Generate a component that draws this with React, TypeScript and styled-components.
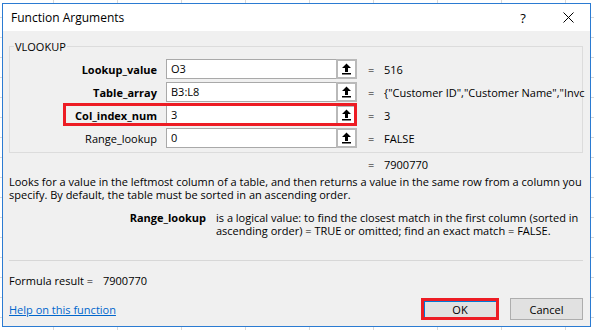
import styled, { createGlobalStyle } from "styled-components";

const GlobalStyle = createGlobalStyle`
  html, body {
    margin: 0;
    padding: 0;
  }
  body {
    width: 594px;
    height: 330px;
    overflow: hidden;
    background-color: #ffffff;
    background-image: linear-gradient(#d9d9d9 1px, transparent 1px),
      linear-gradient(90deg, #d9d9d9 1px, transparent 1px);
    background-size: 64px 20px;
    background-position: 53px 17px;
    font-family: "Segoe UI", "Open Sans", "Noto Sans", sans-serif;
    font-size: 11px;
    color: #000;
  }
`;

const Page = styled.div`
  padding: 3px 3px 3px 2px;
`;

const Dialog = styled.div`
  box-sizing: border-box;
  width: 589px;
  height: 324px;
  border: 1px solid #2b7bd2;
  background: #f0f0f0;
  display: flex;
  flex-direction: column;
`;

const TitleBar = styled.div`
  height: 27px;
  background: #ffffff;
  display: flex;
  align-items: center;
  padding-left: 8px;
`;

const Title = styled.div`
  font-size: 12px;
  flex: 1;
`;

const TitleButton = styled.div<{ $w: number }>`
  width: ${(p) => p.$w}px;
  height: 27px;
  display: flex;
  align-items: center;
  justify-content: center;
  font-size: 13px;
`;

const Content = styled.div`
  flex: 1;
  display: flex;
  flex-direction: column;
  padding: 0 7px 6px 6px;
`;

const Group = styled.fieldset`
  margin: 9px 0 0 0;
  padding: 6px 0 4px 0;
  border: 1px solid #dcdcdc;
  min-width: 0;
`;

const Legend = styled.legend`
  margin-left: 4px;
  padding: 0 1px;
  line-height: 13px;
`;

const Rows = styled.div`
  display: flex;
  flex-direction: column;
  gap: 3px;
`;

const Row = styled.div`
  position: relative;
  display: flex;
  align-items: center;
  height: 20px;
`;

const ArgLabel = styled.div<{ $required?: boolean }>`
  width: 147px;
  margin-right: 9px;
  text-align: right;
  font-weight: ${(p) => (p.$required ? 700 : 400)};
`;

const InputBox = styled.div`
  box-sizing: border-box;
  width: 170px;
  height: 20px;
  background: #ffffff;
  border: 1px solid #a9a9a9;
  border-right: none;
  padding-left: 4px;
  line-height: 18px;
`;

const RefButton = styled.div`
  box-sizing: border-box;
  width: 21px;
  height: 20px;
  background: #ffffff;
  border: 2px solid #b9b9b9;
  display: flex;
  align-items: center;
  justify-content: center;
`;

const Eq = styled.span`
  width: 16px;
  flex: none;
`;

const ArgValue = styled.div`
  display: flex;
  margin-left: 11px;
  flex: 1;
  min-width: 0;
  white-space: nowrap;
`;

const Highlight = styled.div`
  position: absolute;
  left: 53px;
  top: -2px;
  width: 294px;
  height: 23px;
  box-sizing: border-box;
  border: 3px solid #ed1c24;
  pointer-events: none;
`;

const FinalValue = styled.div`
  display: flex;
  margin-top: 5px;
  padding-left: 359px;
  line-height: 13px;
`;

const Description = styled.div`
  margin-top: 4px;
  line-height: 13px;
`;

const ArgHelp = styled.div`
  display: grid;
  grid-template-columns: 197px 1fr;
  column-gap: 10px;
  margin-top: 10px;
  line-height: 13px;
`;

const ArgHelpName = styled.div`
  text-align: right;
  font-weight: 700;
`;

const Separator = styled.div`
  height: 1px;
  background: #d7d7d7;
  margin-top: 23px;
`;

const ResultLine = styled.div`
  margin-top: 13px;
  line-height: 13px;
  display: flex;
`;

const ResultLabel = styled.span`
  width: 94px;
`;

const Footer = styled.div`
  margin-top: auto;
  display: flex;
  align-items: center;
`;

const HelpLink = styled.a`
  color: #0066cc;
  text-decoration: underline;
  flex: 1;
`;

const DialogButton = styled.div<{ $default?: boolean }>`
  box-sizing: border-box;
  width: ${(p) => (p.$default ? 78 : 73)}px;
  height: 22px;
  display: flex;
  align-items: center;
  justify-content: center;
  background: #e1e1e1;
  border: ${(p) => (p.$default ? "3px solid #ed1c24" : "1px solid #adadad")};
  box-shadow: ${(p) => (p.$default ? "inset 1px 1px 0 #0078d7" : "none")};
  margin-left: ${(p) => (p.$default ? 0 : 11)}px;
`;

const RefIcon = () => (
  <svg width="11" height="12" viewBox="0 0 11 12">
    <path d="M5.5 0.5 L10 5 L7 5 L7 9 L4 9 L4 5 L1 5 Z" fill="#000" />
    <rect x="1" y="10" width="9" height="1.5" fill="#000" />
  </svg>
);

const CloseIcon = () => (
  <svg width="11" height="11" viewBox="0 0 11 11">
    <path d="M0.5 0.5 L10.5 10.5 M10.5 0.5 L0.5 10.5" stroke="#000" strokeWidth="1" />
  </svg>
);

type Arg = { name: string; value: string; result: string; required: boolean };

const args: Arg[] = [
  { name: "Lookup_value", value: "O3", result: "516", required: true },
  {
    name: "Table_array",
    value: "B3:L8",
    result: '{"Customer ID","Customer Name","Invc',
    required: true,
  },
  { name: "Col_index_num", value: "3", result: "3", required: true },
  { name: "Range_lookup", value: "0", result: "FALSE", required: false },
];

export default function App() {
  return (
    <>
      <GlobalStyle />
      <Page>
        <Dialog>
          <TitleBar>
            <Title>Function Arguments</Title>
            <TitleButton $w={46}>?</TitleButton>
            <TitleButton $w={44}>
              <CloseIcon />
            </TitleButton>
          </TitleBar>
          <Content>
            <Group>
              <Legend>VLOOKUP</Legend>
              <Rows>
                {args.map((a) => (
                  <Row key={a.name}>
                    <ArgLabel $required={a.required}>{a.name}</ArgLabel>
                    <InputBox>{a.value}</InputBox>
                    <RefButton>
                      <RefIcon />
                    </RefButton>
                    <ArgValue>
                      <Eq>=</Eq>
                      <span>{a.result}</span>
                    </ArgValue>
                    {a.name === "Col_index_num" && <Highlight />}
                  </Row>
                ))}
              </Rows>
            </Group>
            <FinalValue>
              <Eq>=</Eq>
              <span>7900770</span>
            </FinalValue>
            <Description>
              Looks for a value in the leftmost column of a table, and then returns a value in the
              same row from a column you specify. By default, the table must be sorted in an
              ascending order.
            </Description>
            <ArgHelp>
              <ArgHelpName>Range_lookup</ArgHelpName>
              <div>
                is a logical value: to find the closest match in the first column (sorted in
                ascending order) = TRUE or omitted; find an exact match = FALSE.
              </div>
            </ArgHelp>
            <Separator />
            <ResultLine>
              <ResultLabel>Formula result =</ResultLabel>
              <span>7900770</span>
            </ResultLine>
            <Footer>
              <HelpLink href="#">Help on this function</HelpLink>
              <DialogButton $default>OK</DialogButton>
              <DialogButton>Cancel</DialogButton>
            </Footer>
          </Content>
        </Dialog>
      </Page>
    </>
  );
}
